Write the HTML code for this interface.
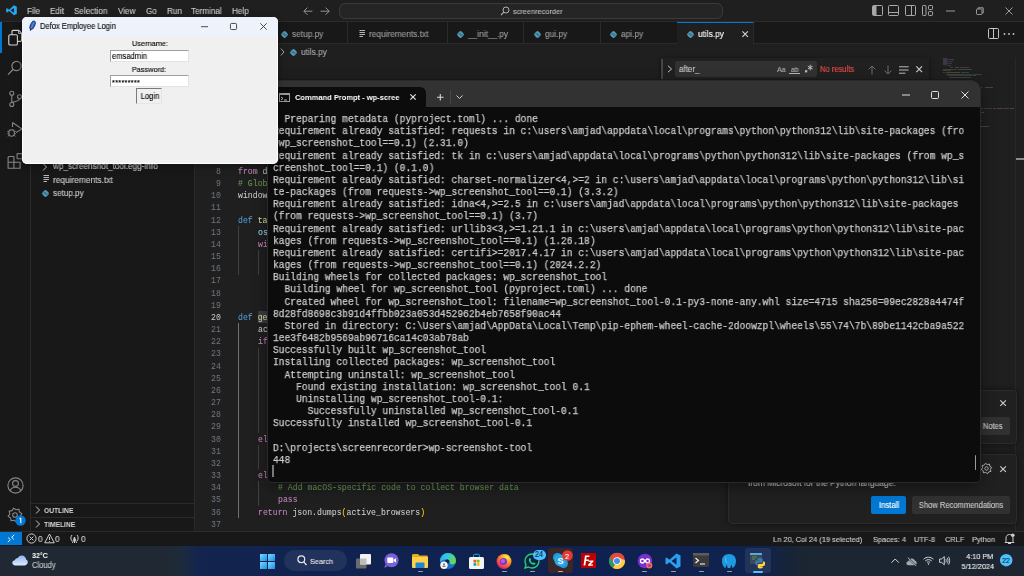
<!DOCTYPE html>
<html><head><meta charset="utf-8">
<style>
*{margin:0;padding:0;box-sizing:border-box}
html,body{width:1024px;height:576px;overflow:hidden;background:#1f1f1f;font-family:"Liberation Sans",sans-serif;position:relative}
.a{position:absolute}
.t{position:absolute;white-space:pre;line-height:1;will-change:transform;-webkit-text-stroke-width:0.12px}
svg.a{overflow:visible}
</style></head><body>

<div class="a" style="left:0px;top:0px;width:1024px;height:22px;background:#1f1f1f;border-bottom:1px solid #2b2b2b;"></div>
<div class="a" style="left:0px;top:22px;width:31px;height:509px;background:#181818;border-right:1px solid #2b2b2b;"></div>
<div class="a" style="left:31px;top:22px;width:164px;height:509px;background:#181818;border-right:1px solid #2b2b2b;"></div>
<div class="a" style="left:195px;top:22px;width:829px;height:22px;background:#181818;border-bottom:1px solid #2b2b2b;"></div>
<div class="a" style="left:0px;top:531px;width:1024px;height:14px;background:#181818;border-top:1px solid #2b2b2b;"></div>
<svg class="a" style="left:6px;top:5.2px;" width="11" height="10.6" viewBox="0 0 11 10.6"><path d="M7.9 0.3L10.8 1.7V8.9L7.9 10.3L3.1 5.9L1.1 7.4L0.2 7V3.6L1.1 3.2L3.1 4.7L7.9 0.3Z M7.9 2.9L4.6 5.3L7.9 7.7Z" fill="#23a9f2" fill-rule="evenodd"/></svg>
<div class="t" style="left:27.30px;top:7.2000px;font-size:8.7500px;color:#cccccc;font-family:'Liberation Sans',sans-serif;transform:scaleX(0.9259);transform-origin:0 0;">File</div>
<div class="t" style="left:50.00px;top:7.2000px;font-size:8.7500px;color:#cccccc;font-family:'Liberation Sans',sans-serif;transform:scaleX(0.9259);transform-origin:0 0;">Edit</div>
<div class="t" style="left:74.40px;top:7.2000px;font-size:8.7500px;color:#cccccc;font-family:'Liberation Sans',sans-serif;transform:scaleX(0.9259);transform-origin:0 0;">Selection</div>
<div class="t" style="left:118.00px;top:7.2000px;font-size:8.7500px;color:#cccccc;font-family:'Liberation Sans',sans-serif;transform:scaleX(0.9259);transform-origin:0 0;">View</div>
<div class="t" style="left:145.50px;top:7.2000px;font-size:8.7500px;color:#cccccc;font-family:'Liberation Sans',sans-serif;transform:scaleX(0.9259);transform-origin:0 0;">Go</div>
<div class="t" style="left:166.80px;top:7.2000px;font-size:8.7500px;color:#cccccc;font-family:'Liberation Sans',sans-serif;transform:scaleX(0.9259);transform-origin:0 0;">Run</div>
<div class="t" style="left:191.40px;top:7.2000px;font-size:8.7500px;color:#cccccc;font-family:'Liberation Sans',sans-serif;transform:scaleX(0.9259);transform-origin:0 0;">Terminal</div>
<div class="t" style="left:232.40px;top:7.2000px;font-size:8.7500px;color:#cccccc;font-family:'Liberation Sans',sans-serif;transform:scaleX(0.9259);transform-origin:0 0;">Help</div>
<svg class="a" style="left:303px;top:7px;" width="10" height="8.4" viewBox="0 0 10 8.4"><path d="M9.4 4.2H1M4.4 0.6L0.8 4.2L4.4 7.8" stroke="#a8a8a8" stroke-width="0.85" fill="none"/></svg>
<svg class="a" style="left:319.5px;top:7px;" width="10" height="8.4" viewBox="0 0 10 8.4"><path d="M0.6 4.2H9M5.6 0.6L9.2 4.2L5.6 7.8" stroke="#a8a8a8" stroke-width="0.85" fill="none"/></svg>
<div class="a" style="left:338.5px;top:3.2px;width:384px;height:15.6px;background:#252525;border:1px solid #3a3a3a;border-radius:6px;"></div>
<svg class="a" style="left:500px;top:6px;" width="10" height="10" viewBox="0 0 10 10"><circle cx="6" cy="4" r="3" stroke="#b0b0b0" stroke-width="1" fill="none"/><path d="M3.9 6.1L1 9" stroke="#b0b0b0" stroke-width="1.1"/></svg>
<div class="t" style="left:512.50px;top:8.0000px;font-size:7.9844px;color:#b8b8b8;font-family:'Liberation Sans',sans-serif;transform:scaleX(0.9259);transform-origin:0 0;">screenrecorder</div>
<svg class="a" style="left:872px;top:5px;" width="11" height="11" viewBox="0 0 11 11"><rect x="0.5" y="0.5" width="10" height="10" rx="1" stroke="#a8a8a8" fill="none"/><rect x="1" y="1" width="3.5" height="9" fill="#a8a8a8"/></svg>
<svg class="a" style="left:888px;top:5px;" width="11" height="11" viewBox="0 0 11 11"><rect x="0.5" y="0.5" width="10" height="10" rx="1" stroke="#a8a8a8" fill="none"/><path d="M0.5 7.5H10.5" stroke="#a8a8a8"/></svg>
<svg class="a" style="left:905px;top:5px;" width="11" height="11" viewBox="0 0 11 11"><rect x="0.5" y="0.5" width="10" height="10" rx="1" stroke="#a8a8a8" fill="none"/><path d="M6.5 0.5V10.5" stroke="#a8a8a8"/></svg>
<svg class="a" style="left:922px;top:5px;" width="11" height="11" viewBox="0 0 11 11"><rect x="0.5" y="0.5" width="3.5" height="10" rx="0.8" stroke="#a8a8a8" fill="none"/><rect x="6.5" y="0.5" width="4" height="4" rx="0.8" stroke="#a8a8a8" fill="none"/><rect x="6.5" y="6.5" width="4" height="4" rx="0.8" stroke="#a8a8a8" fill="none"/></svg>
<svg class="a" style="left:946px;top:10px;" width="9" height="2" viewBox="0 0 9 2"><path d="M0 1H9" stroke="#9a9a9a" stroke-width="1"/></svg>
<svg class="a" style="left:976px;top:7px;" width="8" height="8" viewBox="0 0 8 8"><rect x="0.5" y="2" width="5.5" height="5.5" rx="0.8" stroke="#9a9a9a" fill="none"/><path d="M2 2V0.8H7.2V6H6" stroke="#9a9a9a" fill="none"/></svg>
<svg class="a" style="left:1005px;top:7px;" width="8" height="8" viewBox="0 0 8 8"><path d="M0.5 0.5L7.5 7.5M7.5 0.5L0.5 7.5" stroke="#9a9a9a" stroke-width="1"/></svg>
<div class="a" style="left:0px;top:22px;width:1.6px;height:31px;background:#0078d4;"></div>
<svg class="a" style="left:7px;top:29px;" width="17" height="17" viewBox="0 0 17 17"><path d="M6.2 1.4H11.8L14.6 4.2V11.2Q14.6 12.4 13.4 12.4H6.2Q5 12.4 5 11.2V2.6Q5 1.4 6.2 1.4Z" stroke="#d7d7d7" stroke-width="1.1" fill="none"/><path d="M11.6 1.6V4.4H14.4" stroke="#d7d7d7" stroke-width="0.9" fill="none"/><rect x="1.8" y="5.8" width="8.6" height="10.2" rx="1.3" stroke="#d7d7d7" stroke-width="1.1" fill="#181818"/></svg>
<svg class="a" style="left:7px;top:60px;" width="16" height="16" viewBox="0 0 16 16"><circle cx="9.5" cy="6" r="4.6" stroke="#868686" stroke-width="1.2" fill="none"/><path d="M6.2 9.3L1 14.6" stroke="#868686" stroke-width="1.3"/></svg>
<svg class="a" style="left:7px;top:90px;" width="16" height="18" viewBox="0 0 16 18"><circle cx="4.8" cy="3.2" r="2" stroke="#868686" stroke-width="1.1" fill="none"/><circle cx="4.8" cy="14.5" r="2" stroke="#868686" stroke-width="1.1" fill="none"/><circle cx="12.5" cy="6.8" r="2" stroke="#868686" stroke-width="1.1" fill="none"/><path d="M4.8 5.2V12.5M12.5 8.8C12.5 11 9 11.5 4.8 12.5" stroke="#868686" stroke-width="1.1" fill="none"/></svg>
<svg class="a" style="left:6px;top:120px;" width="18" height="18" viewBox="0 0 18 18"><path d="M6.5 2.5V7M6.5 2.5L16 9L10 12.5" stroke="#868686" stroke-width="1.1" fill="none" stroke-linejoin="round"/><ellipse cx="5.6" cy="13" rx="2.8" ry="3.2" stroke="#868686" stroke-width="1.1" fill="none"/><path d="M1.3 11.3H2.8M8.4 11.3H9.9M1.3 13.6H2.8M8.4 13.6H9.9M1.8 16.3L3.2 15.2M9.4 16.3L8 15.2M3.6 9.7L4.5 10.5M7.6 9.7L6.7 10.5" stroke="#868686" stroke-width="0.9" fill="none"/></svg>
<svg class="a" style="left:6px;top:150px;" width="18" height="19" viewBox="0 0 18 19"><path d="M2.1 12.5V7.5Q2.1 6.5 3.1 6.5H7.9V18.3H2.1ZM2.1 12.3H14.1V18.3H7.9" stroke="#868686" stroke-width="1.1" fill="none"/><rect x="11.1" y="3.6" width="5.2" height="5.2" rx="0.5" stroke="#868686" stroke-width="1.1" fill="none"/></svg>
<svg class="a" style="left:7px;top:477px;" width="17" height="17" viewBox="0 0 17 17"><circle cx="8.5" cy="8.5" r="7.6" stroke="#868686" stroke-width="1.1" fill="none"/><circle cx="8.5" cy="6.5" r="2.9" stroke="#868686" stroke-width="1.1" fill="none"/><path d="M3.3 14C4 11.3 6 10.3 8.5 10.3S13 11.3 13.7 14" stroke="#868686" stroke-width="1.1" fill="none"/></svg>
<svg class="a" style="left:7px;top:507px;" width="16" height="16" viewBox="0 0 16 16"><path d="M14.87 6.63 L13.20 9.03 L13.82 11.89 L10.94 12.41 L9.37 14.87 L6.97 13.20 L4.11 13.82 L3.59 10.94 L1.13 9.37 L2.80 6.97 L2.18 4.11 L5.06 3.59 L6.63 1.13 L9.03 2.80 L11.89 2.18 L12.41 5.06Z" stroke="#868686" stroke-width="1.1" fill="none" stroke-linejoin="round"/><circle cx="8" cy="8" r="2.3" stroke="#868686" stroke-width="1.1" fill="none"/></svg>
<svg class="a" style="left:15px;top:515px;" width="11" height="11" viewBox="0 0 11 11"><circle cx="5.5" cy="5.5" r="5.2" fill="#0078d4"/><path d="M5.8 3V8.2M4.6 4L5.8 3" stroke="#fff" stroke-width="1.1" fill="none"/></svg>
<div class="t" style="left:53.00px;top:162.3000px;font-size:8.8594px;color:#cccccc;font-family:'Liberation Sans',sans-serif;transform:scaleX(0.9259);transform-origin:0 0;">wp_screenshot_tool.egg-info</div>
<svg class="a" style="left:42px;top:163px;" width="6" height="8" viewBox="0 0 6 8"><path d="M1 0.5L4.5 4L1 7.5" stroke="#c5c5c5" fill="none"/></svg>
<svg class="a" style="left:43px;top:175px;" width="7" height="8" viewBox="0 0 7 8"><path d="M0.5 0.5H6M0.5 2.5H6M0.5 4.5H6M0.5 6.5H4" stroke="#b4b4b4" stroke-width="1"/></svg>
<div class="t" style="left:53.00px;top:175.6000px;font-size:9.0000px;color:#cccccc;font-family:'Liberation Sans',sans-serif;transform:scaleX(0.9259);transform-origin:0 0;">requirements.txt</div>
<div class="t" style="left:53.00px;top:189.4000px;font-size:8.7500px;color:#cccccc;font-family:'Liberation Sans',sans-serif;transform:scaleX(0.9259);transform-origin:0 0;">setup.py</div>
<svg class="a" style="left:40.5px;top:188.5px;" width="9" height="9" viewBox="0 0 9 9"><rect x="1.6" y="1.6" width="5.8" height="5.8" rx="1.8" transform="rotate(45 4.5 4.5)" fill="#519aba"/><path d="M2.4 3.9L5 3.9M4 5.1L6.6 5.1" stroke="#1b1b1b" stroke-width="0.7" opacity="0.7"/></svg>
<div class="a" style="left:31px;top:503px;width:163px;height:1px;background:#2b2b2b;"></div>
<div class="a" style="left:31px;top:517px;width:163px;height:1px;background:#2b2b2b;"></div>
<svg class="a" style="left:35px;top:506px;" width="6" height="8" viewBox="0 0 6 8"><path d="M1 0.5L4.5 4L1 7.5" stroke="#c5c5c5" fill="none"/></svg>
<svg class="a" style="left:35px;top:520px;" width="6" height="8" viewBox="0 0 6 8"><path d="M1 0.5L4.5 4L1 7.5" stroke="#c5c5c5" fill="none"/></svg>
<div class="t" style="left:43.70px;top:507.4000px;font-size:7.6406px;color:#d6d6d6;font-family:'Liberation Sans',sans-serif;font-weight:700;transform:scaleX(0.8772);transform-origin:0 0;-webkit-text-stroke-width:0;">OUTLINE</div>
<div class="t" style="left:43.70px;top:521.4000px;font-size:7.6406px;color:#d6d6d6;font-family:'Liberation Sans',sans-serif;font-weight:700;transform:scaleX(0.8772);transform-origin:0 0;-webkit-text-stroke-width:0;">TIMELINE</div>
<div class="a" style="left:347px;top:22px;width:1px;height:22px;background:#2b2b2b;"></div>
<svg class="a" style="left:280.0px;top:29.5px;" width="9" height="9" viewBox="0 0 9 9"><rect x="1.6" y="1.6" width="5.8" height="5.8" rx="1.8" transform="rotate(45 4.5 4.5)" fill="#519aba"/><path d="M2.4 3.9L5 3.9M4 5.1L6.6 5.1" stroke="#1b1b1b" stroke-width="0.7" opacity="0.7"/></svg>
<div class="t" style="left:291.75px;top:30.3000px;font-size:8.9688px;color:#9d9d9d;font-family:'Liberation Sans',sans-serif;transform:scaleX(0.9259);transform-origin:0 0;">setup.py</div>
<div class="a" style="left:447px;top:22px;width:1px;height:22px;background:#2b2b2b;"></div>
<svg class="a" style="left:358.5px;top:30px;" width="7" height="8" viewBox="0 0 7 8"><path d="M0.5 0.5H6M0.5 2.5H6M0.5 4.5H6M0.5 6.5H4" stroke="#b4b4b4" stroke-width="1"/></svg>
<div class="t" style="left:368.50px;top:30.3000px;font-size:8.9688px;color:#9d9d9d;font-family:'Liberation Sans',sans-serif;transform:scaleX(0.9259);transform-origin:0 0;">requirements.txt</div>
<div class="a" style="left:523px;top:22px;width:1px;height:22px;background:#2b2b2b;"></div>
<svg class="a" style="left:455.75px;top:29.5px;" width="9" height="9" viewBox="0 0 9 9"><rect x="1.6" y="1.6" width="5.8" height="5.8" rx="1.8" transform="rotate(45 4.5 4.5)" fill="#519aba"/><path d="M2.4 3.9L5 3.9M4 5.1L6.6 5.1" stroke="#1b1b1b" stroke-width="0.7" opacity="0.7"/></svg>
<div class="t" style="left:468.00px;top:30.3000px;font-size:8.9688px;color:#9d9d9d;font-family:'Liberation Sans',sans-serif;transform:scaleX(0.9259);transform-origin:0 0;">__init__.py</div>
<div class="a" style="left:600px;top:22px;width:1px;height:22px;background:#2b2b2b;"></div>
<svg class="a" style="left:532.5px;top:29.5px;" width="9" height="9" viewBox="0 0 9 9"><rect x="1.6" y="1.6" width="5.8" height="5.8" rx="1.8" transform="rotate(45 4.5 4.5)" fill="#519aba"/><path d="M2.4 3.9L5 3.9M4 5.1L6.6 5.1" stroke="#1b1b1b" stroke-width="0.7" opacity="0.7"/></svg>
<div class="t" style="left:544.50px;top:30.3000px;font-size:8.9688px;color:#9d9d9d;font-family:'Liberation Sans',sans-serif;transform:scaleX(0.9259);transform-origin:0 0;">gui.py</div>
<div class="a" style="left:676.5px;top:22px;width:1px;height:22px;background:#2b2b2b;"></div>
<svg class="a" style="left:609.0px;top:29.5px;" width="9" height="9" viewBox="0 0 9 9"><rect x="1.6" y="1.6" width="5.8" height="5.8" rx="1.8" transform="rotate(45 4.5 4.5)" fill="#519aba"/><path d="M2.4 3.9L5 3.9M4 5.1L6.6 5.1" stroke="#1b1b1b" stroke-width="0.7" opacity="0.7"/></svg>
<div class="t" style="left:621.00px;top:30.3000px;font-size:8.9688px;color:#9d9d9d;font-family:'Liberation Sans',sans-serif;transform:scaleX(0.9259);transform-origin:0 0;">api.py</div>
<div class="a" style="left:677px;top:22px;width:77px;height:23px;background:#1f1f1f;border-top:1px solid #0078d4;border-right:1px solid #2b2b2b;"></div>
<svg class="a" style="left:686.0px;top:29.5px;" width="9" height="9" viewBox="0 0 9 9"><rect x="1.6" y="1.6" width="5.8" height="5.8" rx="1.8" transform="rotate(45 4.5 4.5)" fill="#519aba"/><path d="M2.4 3.9L5 3.9M4 5.1L6.6 5.1" stroke="#1b1b1b" stroke-width="0.7" opacity="0.7"/></svg>
<div class="t" style="left:698.00px;top:30.3000px;font-size:8.9688px;color:#ffffff;font-family:'Liberation Sans',sans-serif;transform:scaleX(0.9259);transform-origin:0 0;">utils.py</div>
<svg class="a" style="left:741.7px;top:31px;" width="6.3" height="6.3" viewBox="0 0 6.3 6.3"><path d="M0.4 0.4L5.9 5.9M5.9 0.4L0.4 5.9" stroke="#d0d0d0" stroke-width="1.15"/></svg>
<svg class="a" style="left:988px;top:28px;" width="11" height="11" viewBox="0 0 11 11"><rect x="0.5" y="0.5" width="10" height="10" rx="1" stroke="#c5c5c5" fill="none"/><path d="M5.5 0.5V10.5" stroke="#c5c5c5"/></svg>
<svg class="a" style="left:1003px;top:33px;" width="13" height="2" viewBox="0 0 13 2"><circle cx="1.5" cy="1" r="0.9" fill="#c5c5c5"/><circle cx="6" cy="1" r="0.9" fill="#c5c5c5"/><circle cx="10.5" cy="1" r="0.9" fill="#c5c5c5"/></svg>
<svg class="a" style="left:280px;top:48px;" width="5" height="8" viewBox="0 0 5 8"><path d="M0.8 0.5L4 4L0.8 7.5" stroke="#a9a9a9" fill="none"/></svg>
<svg class="a" style="left:289.0px;top:48.0px;" width="9" height="9" viewBox="0 0 9 9"><rect x="1.6" y="1.6" width="5.8" height="5.8" rx="1.8" transform="rotate(45 4.5 4.5)" fill="#519aba"/><path d="M2.4 3.9L5 3.9M4 5.1L6.6 5.1" stroke="#1b1b1b" stroke-width="0.7" opacity="0.7"/></svg>
<div class="t" style="left:301.00px;top:48.2000px;font-size:8.9688px;color:#a9a9a9;font-family:'Liberation Sans',sans-serif;transform:scaleX(0.9259);transform-origin:0 0;">utils.py</div>
<div class="a" style="left:0px;top:532px;width:22px;height:13px;background:#0078d4;"></div>
<svg class="a" style="left:7px;top:534px;" width="8" height="9" viewBox="0 0 8 9"><path d="M0.8 8.2L3.3 5.7L1.2 3.6M7.2 0.8L4.7 3.3L6.8 5.4" stroke="#fff" stroke-width="1" fill="none"/></svg>
<svg class="a" style="left:26px;top:533px;" width="11" height="11" viewBox="0 0 11 11"><circle cx="5.5" cy="5.5" r="4.6" stroke="#cccccc" stroke-width="1" fill="none"/><path d="M3.6 3.6L7.4 7.4M7.4 3.6L3.6 7.4" stroke="#cccccc" stroke-width="1"/></svg>
<div class="t" style="left:37.50px;top:534.8000px;font-size:8.8594px;color:#cccccc;font-family:'Liberation Sans',sans-serif;transform:scaleX(0.9259);transform-origin:0 0;">0</div>
<svg class="a" style="left:44px;top:533px;" width="11" height="11" viewBox="0 0 11 11"><path d="M5.5 1L10.3 9.8H0.7Z" stroke="#cccccc" stroke-width="1" fill="none" stroke-linejoin="round"/><path d="M5.5 4V7M5.5 8V8.8" stroke="#cccccc" stroke-width="1"/></svg>
<div class="t" style="left:55.00px;top:534.8000px;font-size:8.8594px;color:#cccccc;font-family:'Liberation Sans',sans-serif;transform:scaleX(0.9259);transform-origin:0 0;">0</div>
<svg class="a" style="left:69px;top:533px;" width="11" height="11" viewBox="0 0 11 11"><path d="M3 2C1.5 3.5 1.5 6.5 3 8M8 2C9.5 3.5 9.5 6.5 8 8M5.5 4V10M3.5 10L5.5 4L7.5 10" stroke="#cccccc" stroke-width="1" fill="none"/></svg>
<div class="t" style="left:80.50px;top:534.8000px;font-size:8.8594px;color:#cccccc;font-family:'Liberation Sans',sans-serif;transform:scaleX(0.9259);transform-origin:0 0;">0</div>
<div class="t" style="left:773.40px;top:535.8000px;font-size:8.0469px;color:#cccccc;font-family:'Liberation Sans',sans-serif;transform:scaleX(0.9259);transform-origin:0 0;">Ln 20, Col 24 (19 selected)</div>
<div class="t" style="left:872.75px;top:535.8000px;font-size:8.0469px;color:#cccccc;font-family:'Liberation Sans',sans-serif;transform:scaleX(0.9259);transform-origin:0 0;">Spaces: 4</div>
<div class="t" style="left:914.00px;top:535.8000px;font-size:8.0469px;color:#cccccc;font-family:'Liberation Sans',sans-serif;transform:scaleX(0.9259);transform-origin:0 0;">UTF-8</div>
<div class="t" style="left:944.60px;top:535.8000px;font-size:8.0469px;color:#cccccc;font-family:'Liberation Sans',sans-serif;transform:scaleX(0.9259);transform-origin:0 0;">CRLF</div>
<div class="t" style="left:971.80px;top:535.8000px;font-size:8.0469px;color:#cccccc;font-family:'Liberation Sans',sans-serif;transform:scaleX(0.9259);transform-origin:0 0;">Python</div>
<svg class="a" style="left:1004px;top:533px;" width="11" height="11" viewBox="0 0 11 11"><path d="M2 8.5V5C2 2.8 3.5 1.5 5.5 1.5S9 2.8 9 5V8.5L10 9.5H1ZM4 10.5H7" stroke="#cccccc" stroke-width="1" fill="none"/><circle cx="8.8" cy="2.3" r="1.8" fill="#cccccc"/></svg>
<div class="t" style="right:802.80px;top:82.6600px;font-size:8.2031px;color:#6e7681;font-family:'Liberation Mono',monospace;-webkit-text-stroke-width:0;">1</div>
<div class="t" style="right:802.80px;top:94.8300px;font-size:8.2031px;color:#6e7681;font-family:'Liberation Mono',monospace;-webkit-text-stroke-width:0;">2</div>
<div class="t" style="right:802.80px;top:107.0000px;font-size:8.2031px;color:#6e7681;font-family:'Liberation Mono',monospace;-webkit-text-stroke-width:0;">3</div>
<div class="t" style="right:802.80px;top:119.1700px;font-size:8.2031px;color:#6e7681;font-family:'Liberation Mono',monospace;-webkit-text-stroke-width:0;">4</div>
<div class="t" style="right:802.80px;top:131.3400px;font-size:8.2031px;color:#6e7681;font-family:'Liberation Mono',monospace;-webkit-text-stroke-width:0;">5</div>
<div class="t" style="right:802.80px;top:143.5100px;font-size:8.2031px;color:#6e7681;font-family:'Liberation Mono',monospace;-webkit-text-stroke-width:0;">6</div>
<div class="t" style="right:802.80px;top:155.6800px;font-size:8.2031px;color:#6e7681;font-family:'Liberation Mono',monospace;-webkit-text-stroke-width:0;">7</div>
<div class="t" style="right:802.80px;top:167.8500px;font-size:8.2031px;color:#6e7681;font-family:'Liberation Mono',monospace;-webkit-text-stroke-width:0;">8</div>
<div class="t" style="right:802.80px;top:180.0200px;font-size:8.2031px;color:#6e7681;font-family:'Liberation Mono',monospace;-webkit-text-stroke-width:0;">9</div>
<div class="t" style="right:802.80px;top:192.1900px;font-size:8.2031px;color:#6e7681;font-family:'Liberation Mono',monospace;-webkit-text-stroke-width:0;">10</div>
<div class="t" style="right:802.80px;top:204.3600px;font-size:8.2031px;color:#6e7681;font-family:'Liberation Mono',monospace;-webkit-text-stroke-width:0;">11</div>
<div class="t" style="right:802.80px;top:216.5300px;font-size:8.2031px;color:#6e7681;font-family:'Liberation Mono',monospace;-webkit-text-stroke-width:0;">12</div>
<div class="t" style="right:802.80px;top:228.7000px;font-size:8.2031px;color:#6e7681;font-family:'Liberation Mono',monospace;-webkit-text-stroke-width:0;">13</div>
<div class="t" style="right:802.80px;top:240.8700px;font-size:8.2031px;color:#6e7681;font-family:'Liberation Mono',monospace;-webkit-text-stroke-width:0;">14</div>
<div class="t" style="right:802.80px;top:253.0400px;font-size:8.2031px;color:#6e7681;font-family:'Liberation Mono',monospace;-webkit-text-stroke-width:0;">15</div>
<div class="t" style="right:802.80px;top:265.2100px;font-size:8.2031px;color:#6e7681;font-family:'Liberation Mono',monospace;-webkit-text-stroke-width:0;">16</div>
<div class="t" style="right:802.80px;top:277.3800px;font-size:8.2031px;color:#6e7681;font-family:'Liberation Mono',monospace;-webkit-text-stroke-width:0;">17</div>
<div class="t" style="right:802.80px;top:289.5500px;font-size:8.2031px;color:#6e7681;font-family:'Liberation Mono',monospace;-webkit-text-stroke-width:0;">18</div>
<div class="t" style="right:802.80px;top:301.7200px;font-size:8.2031px;color:#6e7681;font-family:'Liberation Mono',monospace;-webkit-text-stroke-width:0;">19</div>
<div class="t" style="right:802.80px;top:313.8900px;font-size:8.2031px;color:#cccccc;font-family:'Liberation Mono',monospace;-webkit-text-stroke-width:0;">20</div>
<div class="t" style="right:802.80px;top:326.0600px;font-size:8.2031px;color:#6e7681;font-family:'Liberation Mono',monospace;-webkit-text-stroke-width:0;">21</div>
<div class="t" style="right:802.80px;top:338.2300px;font-size:8.2031px;color:#6e7681;font-family:'Liberation Mono',monospace;-webkit-text-stroke-width:0;">22</div>
<div class="t" style="right:802.80px;top:350.4000px;font-size:8.2031px;color:#6e7681;font-family:'Liberation Mono',monospace;-webkit-text-stroke-width:0;">23</div>
<div class="t" style="right:802.80px;top:362.5700px;font-size:8.2031px;color:#6e7681;font-family:'Liberation Mono',monospace;-webkit-text-stroke-width:0;">24</div>
<div class="t" style="right:802.80px;top:374.7400px;font-size:8.2031px;color:#6e7681;font-family:'Liberation Mono',monospace;-webkit-text-stroke-width:0;">25</div>
<div class="t" style="right:802.80px;top:386.9100px;font-size:8.2031px;color:#6e7681;font-family:'Liberation Mono',monospace;-webkit-text-stroke-width:0;">26</div>
<div class="t" style="right:802.80px;top:399.0800px;font-size:8.2031px;color:#6e7681;font-family:'Liberation Mono',monospace;-webkit-text-stroke-width:0;">27</div>
<div class="t" style="right:802.80px;top:411.2500px;font-size:8.2031px;color:#6e7681;font-family:'Liberation Mono',monospace;-webkit-text-stroke-width:0;">28</div>
<div class="t" style="right:802.80px;top:423.4200px;font-size:8.2031px;color:#6e7681;font-family:'Liberation Mono',monospace;-webkit-text-stroke-width:0;">29</div>
<div class="t" style="right:802.80px;top:435.5900px;font-size:8.2031px;color:#6e7681;font-family:'Liberation Mono',monospace;-webkit-text-stroke-width:0;">30</div>
<div class="t" style="right:802.80px;top:447.7600px;font-size:8.2031px;color:#6e7681;font-family:'Liberation Mono',monospace;-webkit-text-stroke-width:0;">31</div>
<div class="t" style="right:802.80px;top:459.9300px;font-size:8.2031px;color:#6e7681;font-family:'Liberation Mono',monospace;-webkit-text-stroke-width:0;">32</div>
<div class="t" style="right:802.80px;top:472.1000px;font-size:8.2031px;color:#6e7681;font-family:'Liberation Mono',monospace;-webkit-text-stroke-width:0;">33</div>
<div class="t" style="right:802.80px;top:484.2700px;font-size:8.2031px;color:#6e7681;font-family:'Liberation Mono',monospace;-webkit-text-stroke-width:0;">34</div>
<div class="t" style="right:802.80px;top:496.4400px;font-size:8.2031px;color:#6e7681;font-family:'Liberation Mono',monospace;-webkit-text-stroke-width:0;">35</div>
<div class="t" style="right:802.80px;top:508.6100px;font-size:8.2031px;color:#6e7681;font-family:'Liberation Mono',monospace;-webkit-text-stroke-width:0;">36</div>
<div class="t" style="right:802.80px;top:520.7800px;font-size:8.2031px;color:#6e7681;font-family:'Liberation Mono',monospace;-webkit-text-stroke-width:0;">37</div>
<div class="a" style="left:257.8px;top:310.94px;width:12px;height:11.8px;background:#3a3d41;"></div>
<div class="a" style="left:238px;top:225.86px;width:1px;height:48.68px;background:#404040;"></div>
<div class="a" style="left:258px;top:250.2px;width:1px;height:24.34px;background:#404040;"></div>
<div class="a" style="left:238px;top:323.23px;width:1px;height:194.72px;background:#707070;"></div>
<div class="a" style="left:258px;top:347.56px;width:1px;height:85.19px;background:#404040;"></div>
<div class="a" style="left:258px;top:444.93px;width:1px;height:24.34px;background:#404040;"></div>
<div class="a" style="left:258px;top:481.44px;width:1px;height:24.34px;background:#404040;"></div>
<div class="t" style="left:238.25px;top:167.8500px;font-size:8.2px;font-family:'Liberation Mono',monospace;-webkit-text-stroke-width:0.05px;"><span style="color:#c586c0">from</span><span style="color:#cccccc"> datetime</span></div>
<div class="t" style="left:238.25px;top:180.0200px;font-size:8.2px;font-family:'Liberation Mono',monospace;-webkit-text-stroke-width:0.05px;"><span style="color:#6a9955"># Global</span></div>
<div class="t" style="left:238.25px;top:192.1900px;font-size:8.2px;font-family:'Liberation Mono',monospace;-webkit-text-stroke-width:0.05px;"><span style="color:#cccccc">window</span></div>
<div class="t" style="left:238.25px;top:216.5300px;font-size:8.2px;font-family:'Liberation Mono',monospace;-webkit-text-stroke-width:0.05px;"><span style="color:#569cd6">def</span><span style="color:#cccccc"> </span><span style="color:#dcdcaa">take</span></div>
<div class="t" style="left:257.97px;top:228.7000px;font-size:8.2px;font-family:'Liberation Mono',monospace;-webkit-text-stroke-width:0.05px;"><span style="color:#9cdcfe">os</span></div>
<div class="t" style="left:257.97px;top:240.8700px;font-size:8.2px;font-family:'Liberation Mono',monospace;-webkit-text-stroke-width:0.05px;"><span style="color:#c586c0">with</span></div>
<div class="t" style="left:238.25px;top:313.8900px;font-size:8.2px;font-family:'Liberation Mono',monospace;-webkit-text-stroke-width:0.05px;"><span style="color:#569cd6">def</span><span style="color:#cccccc"> </span><span style="color:#dcdcaa">get_</span></div>
<div class="t" style="left:257.97px;top:326.0600px;font-size:8.2px;font-family:'Liberation Mono',monospace;-webkit-text-stroke-width:0.05px;"><span style="color:#cccccc">active</span></div>
<div class="t" style="left:257.97px;top:338.2300px;font-size:8.2px;font-family:'Liberation Mono',monospace;-webkit-text-stroke-width:0.05px;"><span style="color:#c586c0">if</span></div>
<div class="t" style="left:257.97px;top:435.5900px;font-size:8.2px;font-family:'Liberation Mono',monospace;-webkit-text-stroke-width:0.05px;"><span style="color:#c586c0">elif</span></div>
<div class="t" style="left:257.97px;top:472.1000px;font-size:8.2px;font-family:'Liberation Mono',monospace;-webkit-text-stroke-width:0.05px;"><span style="color:#c586c0">elif</span></div>
<div class="t" style="left:277.69px;top:484.2700px;font-size:8.2px;font-family:'Liberation Mono',monospace;-webkit-text-stroke-width:0.05px;"><span style="color:#6a9955"># Add macOS-specific code to collect browser data</span></div>
<div class="t" style="left:277.69px;top:496.4400px;font-size:8.2px;font-family:'Liberation Mono',monospace;-webkit-text-stroke-width:0.05px;"><span style="color:#c586c0">pass</span></div>
<div class="t" style="left:257.97px;top:508.6100px;font-size:8.2px;font-family:'Liberation Mono',monospace;-webkit-text-stroke-width:0.05px;"><span style="color:#c586c0">return</span><span style="color:#cccccc"> </span><span style="color:#cccccc">json</span><span style="color:#cccccc">.</span><span style="color:#cccccc">dumps</span><span style="color:#ffd700">(</span><span style="color:#cccccc">active_browsers</span><span style="color:#ffd700">)</span></div>
<div class="a" style="left:943px;top:58px;width:4px;height:6.75px;background:#5e4466;opacity:0.55;"></div>
<div class="a" style="left:947px;top:59px;width:7px;height:0.75px;background:#555555;opacity:0.55;"></div>
<div class="a" style="left:947px;top:61px;width:6px;height:0.75px;background:#505050;opacity:0.55;"></div>
<div class="a" style="left:947px;top:63px;width:5px;height:0.75px;background:#505050;opacity:0.55;"></div>
<div class="a" style="left:947px;top:65px;width:4px;height:0.75px;background:#505050;opacity:0.55;"></div>
<div class="a" style="left:950px;top:67px;width:3px;height:0.75px;background:#555555;opacity:0.55;"></div>
<div class="a" style="left:955px;top:67px;width:4px;height:0.75px;background:#6e5a6e;opacity:0.55;"></div>
<div class="a" style="left:960px;top:67px;width:9px;height:0.75px;background:#555566;opacity:0.55;"></div>
<div class="a" style="left:943px;top:68.5px;width:14px;height:0.75px;background:#4a5e40;opacity:0.55;"></div>
<div class="a" style="left:958px;top:68.5px;width:14px;height:0.75px;background:#5a6a3e;opacity:0.55;"></div>
<div class="a" style="left:943px;top:70px;width:8px;height:0.75px;background:#555555;opacity:0.55;"></div>
<div class="a" style="left:943px;top:72px;width:2px;height:0.75px;background:#3b5f85;opacity:0.55;"></div>
<div class="a" style="left:946px;top:72px;width:14px;height:0.75px;background:#6a6a50;opacity:0.55;"></div>
<div class="a" style="left:961px;top:72px;width:8px;height:0.75px;background:#3b5f85;opacity:0.55;"></div>
<div class="a" style="left:946px;top:73.5px;width:12px;height:0.75px;background:#6a5a6a;opacity:0.55;"></div>
<div class="a" style="left:958px;top:73.5px;width:14px;height:0.75px;background:#555555;opacity:0.55;"></div>
<div class="a" style="left:973px;top:73.5px;width:9px;height:0.75px;background:#3b5f85;opacity:0.55;"></div>
<div class="a" style="left:948px;top:75px;width:28px;height:0.75px;background:#44603a;opacity:0.55;"></div>
<div class="a" style="left:949px;top:76.5px;width:8px;height:0.75px;background:#555555;opacity:0.55;"></div>
<div class="a" style="left:957px;top:76.5px;width:6px;height:0.75px;background:#3b5f85;opacity:0.55;"></div>
<div class="a" style="left:963px;top:76.5px;width:8px;height:0.75px;background:#555555;opacity:0.55;"></div>
<div class="a" style="left:980px;top:86.5px;width:2px;height:0.75px;background:#7a5a40;opacity:0.55;"></div>
<div class="a" style="left:985px;top:86.5px;width:8px;height:0.75px;background:#7a5a40;opacity:0.55;"></div>
<div class="a" style="left:980px;top:108px;width:3px;height:0.75px;background:#6a5a6a;opacity:0.55;"></div>
<div class="a" style="left:984px;top:108px;width:8px;height:0.75px;background:#505050;opacity:0.55;"></div>
<div class="a" style="left:993px;top:108px;width:3px;height:0.75px;background:#6a5a6a;opacity:0.55;"></div>
<div class="a" style="left:997px;top:108px;width:6px;height:0.75px;background:#7a5a40;opacity:0.55;"></div>
<div class="a" style="left:1004px;top:108px;width:5px;height:0.75px;background:#7a5a40;opacity:0.55;"></div>
<div class="a" style="left:1010px;top:108px;width:4px;height:0.75px;background:#7a5a40;opacity:0.55;"></div>
<div class="a" style="left:980px;top:112px;width:4px;height:0.75px;background:#7a5a40;opacity:0.55;"></div>
<div class="a" style="left:980px;top:120px;width:2px;height:0.75px;background:#44603a;opacity:0.55;"></div>
<div class="a" style="left:980px;top:126px;width:9px;height:0.75px;background:#7a5a40;opacity:0.55;"></div>
<div class="a" style="left:1015px;top:58px;width:1px;height:473px;background:#282828;"></div>
<div class="a" style="left:1016px;top:158px;width:8px;height:1.5px;background:#8a8a8a;"></div>
<div class="a" style="left:661px;top:58px;width:268px;height:22px;background:#202020;box-shadow:0 1px 4px rgba(0,0,0,0.6);"></div>
<div class="a" style="left:661px;top:59px;width:2px;height:20px;background:#454545;"></div>
<svg class="a" style="left:667px;top:65px;" width="6" height="8" viewBox="0 0 6 8"><path d="M1 0.8L4.6 4L1 7.2" stroke="#c5c5c5" stroke-width="1" fill="none"/></svg>
<div class="a" style="left:675px;top:61px;width:142px;height:16px;background:#313131;border-radius:2px;"></div>
<div class="t" style="left:679.40px;top:65.4000px;font-size:8.6406px;color:#cccccc;font-family:'Liberation Sans',sans-serif;transform:scaleX(0.9259);transform-origin:0 0;">after_</div>
<div class="t" style="left:776.50px;top:66.0000px;font-size:7.5625px;color:#b0b0b0;font-family:'Liberation Sans',sans-serif;transform:scaleX(0.9259);transform-origin:0 0;">Aa</div>
<div class="t" style="left:790.50px;top:65.5000px;font-size:7.5625px;color:#b0b0b0;font-family:'Liberation Sans',sans-serif;transform:scaleX(0.9259);transform-origin:0 0;">ab</div>
<div class="a" style="left:789.3px;top:72.6px;width:11px;height:0.9px;background:#b8b8b8;"></div>
<svg class="a" style="left:804.5px;top:65px;" width="8" height="8" viewBox="0 0 8 8"><rect x="0" y="5.2" width="2.2" height="2.2" fill="#c0c0c0"/><path d="M5.2 -0.2V5.4M2.8 1.2L7.6 4M7.6 1.2L2.8 4" stroke="#c0c0c0" stroke-width="1"/></svg>
<div class="t" style="left:819.75px;top:66.4000px;font-size:8.2031px;color:#f14c4c;font-family:'Liberation Sans',sans-serif;transform:scaleX(0.9259);transform-origin:0 0;">No results</div>
<svg class="a" style="left:868.3px;top:64.5px;" width="8" height="10" viewBox="0 0 8 10"><path d="M4 9.5V1M0.6 4.4L4 1L7.4 4.4" stroke="#6e6e6e" stroke-width="1" fill="none"/></svg>
<svg class="a" style="left:884.3px;top:64.5px;" width="8" height="10" viewBox="0 0 8 10"><path d="M4 0.5V9M0.6 5.6L4 9L7.4 5.6" stroke="#6e6e6e" stroke-width="1" fill="none"/></svg>
<svg class="a" style="left:899px;top:65.5px;" width="10" height="8" viewBox="0 0 10 8"><path d="M0 0.8H9.6M0 4H9.6M0 7.2H6.4" stroke="#c5c5c5" stroke-width="0.95" fill="none"/></svg>
<svg class="a" style="left:915.8px;top:65.8px;" width="6.4" height="6.4" viewBox="0 0 6.4 6.4"><path d="M0.3 0.3L6.1 6.1M6.1 0.3L0.3 6.1" stroke="#d0d0d0" stroke-width="1.1"/></svg>
<div class="a" style="left:727.5px;top:389.5px;width:289px;height:54.5px;background:#202020;border:1px solid #2b2b2b;border-radius:4px;box-shadow:0 0 6px rgba(0,0,0,0.5);"></div>
<svg class="a" style="left:1000.3px;top:400px;" width="6.2" height="6.2" viewBox="0 0 6.2 6.2"><path d="M0.3 0.3L5.9 5.9M5.9 0.3L0.3 5.9" stroke="#d0d0d0" stroke-width="1.1"/></svg>
<div class="a" style="left:940px;top:416.8px;width:70.3px;height:17.8px;background:#313131;border-radius:2px;"></div>
<div class="t" style="left:953.00px;top:422.9000px;font-size:8.2031px;color:#cccccc;font-family:'Liberation Sans',sans-serif;transform:scaleX(0.9259);transform-origin:0 0;">Release Notes</div>
<div class="a" style="left:727.5px;top:454.3px;width:289px;height:69.7px;background:#202020;border:1px solid #2b2b2b;border-radius:4px;box-shadow:0 0 6px rgba(0,0,0,0.5);"></div>
<div class="t" style="left:748.00px;top:479.2000px;font-size:9.1250px;color:#c8c8c8;font-family:'Liberation Sans',sans-serif;transform:scaleX(0.9259);transform-origin:0 0;">from Microsoft for the Python language.</div>
<svg class="a" style="left:981px;top:463px;" width="11" height="11" viewBox="0 0 11 11"><path d="M10.70 4.47 L9.42 6.28 L9.91 8.44 L7.72 8.83 L6.53 10.70 L4.72 9.42 L2.56 9.91 L2.17 7.72 L0.30 6.53 L1.58 4.72 L1.09 2.56 L3.28 2.17 L4.47 0.30 L6.28 1.58 L8.44 1.09 L8.83 3.28Z" stroke="#c5c5c5" stroke-width="0.9" fill="none" stroke-linejoin="round"/><circle cx="5.5" cy="5.5" r="1.7" stroke="#c5c5c5" stroke-width="0.9" fill="none"/></svg>
<svg class="a" style="left:1000.3px;top:465.5px;" width="6.2" height="6.2" viewBox="0 0 6.2 6.2"><path d="M0.3 0.3L5.9 5.9M5.9 0.3L0.3 5.9" stroke="#d0d0d0" stroke-width="1.1"/></svg>
<div class="a" style="left:871.4px;top:495.8px;width:34.5px;height:18.4px;background:#0078d4;border-radius:2px;"></div>
<div class="t" style="left:888.90px;top:501.0000px;font-size:8.3438px;color:#ffffff;font-family:'Liberation Sans',sans-serif;transform:translateX(-50%) scaleX(0.9259);transform-origin:50% 0;">Install</div>
<div class="a" style="left:912px;top:495.8px;width:98px;height:18.4px;background:#313131;border-radius:2px;"></div>
<div class="t" style="left:961.00px;top:502.0000px;font-size:8.2031px;color:#cccccc;font-family:'Liberation Sans',sans-serif;transform:translateX(-50%) scaleX(0.9259);transform-origin:50% 0;">Show Recommendations</div>
<div class="a" style="left:268px;top:81px;width:712px;height:401.3px;background:#0c0c0c;border-radius:8px 8px 4px 4px;box-shadow:0 0 0 1px #2a2a2a, 0 -1px 0 1px #171717, 0 4px 16px rgba(0,0,0,0.45);"></div>
<div class="a" style="left:268px;top:81px;width:712px;height:26.3px;background:#323232;border-radius:8px 8px 0 0;"></div>
<div class="a" style="left:268px;top:87px;width:158px;height:21px;background:#0c0c0c;border-radius:6px 6px 0 0;"></div>
<svg class="a" style="left:278.5px;top:93px;" width="11" height="9" viewBox="0 0 11 9"><rect x="0.5" y="0.5" width="10" height="8" stroke="#9a9a9a" fill="none"/><rect x="0.5" y="0.5" width="10" height="1.5" fill="#9a9a9a"/><path d="M2 4L4 5.5L2 7M5 7H8" stroke="#cfcfcf" stroke-width="0.9" fill="none"/></svg>
<div class="t" style="left:295.20px;top:94.3000px;font-size:8.1250px;color:#ffffff;font-family:'Liberation Sans',sans-serif;font-weight:700;transform:scaleX(0.9259);transform-origin:0 0;-webkit-text-stroke-width:0;">Command Prompt - wp-scree</div>
<svg class="a" style="left:409.5px;top:94.3px;" width="6" height="6" viewBox="0 0 6 6"><path d="M0.3 0.3L5.7 5.7M5.7 0.3L0.3 5.7" stroke="#e8e8e8" stroke-width="1.1"/></svg>
<svg class="a" style="left:437px;top:94px;" width="6.6" height="6.6" viewBox="0 0 6.6 6.6"><path d="M3.3 0V6.6M0 3.3H6.6" stroke="#d8d8d8" stroke-width="1.1"/></svg>
<div class="a" style="left:450px;top:90px;width:1px;height:14px;background:#454545;"></div>
<svg class="a" style="left:456px;top:95px;" width="7" height="4" viewBox="0 0 7 4"><path d="M0.5 0.5L3.5 3.5L6.5 0.5" stroke="#d0d0d0" stroke-width="1" fill="none"/></svg>
<svg class="a" style="left:902px;top:94px;" width="8" height="2" viewBox="0 0 8 2"><path d="M0 1H8" stroke="#e0e0e0" stroke-width="1"/></svg>
<svg class="a" style="left:931px;top:91px;" width="8" height="8" viewBox="0 0 8 8"><rect x="0.5" y="0.5" width="7" height="7" rx="1" stroke="#e0e0e0" stroke-width="1" fill="none"/></svg>
<svg class="a" style="left:961px;top:90.5px;" width="8" height="8" viewBox="0 0 8 8"><path d="M0.5 0.5L7.5 7.5M7.5 0.5L0.5 7.5" stroke="#e0e0e0" stroke-width="1"/></svg>
<div class="t" style="left:272.95px;top:112.99px;font-size:10.6px;line-height:12.17px;font-family:'Liberation Mono',monospace;color:#cccccc;-webkit-text-stroke:0.25px #cccccc;transform:scaleX(0.9060);transform-origin:0 0;">  Preparing metadata (pyproject.toml) ... done
Requirement already satisfied: requests in c:\users\amjad\appdata\local\programs\python\python312\lib\site-packages (fro
 wp_screenshot_tool==0.1) (2.31.0)
Requirement already satisfied: tk in c:\users\amjad\appdata\local\programs\python\python312\lib\site-packages (from wp_s
creenshot_tool==0.1) (0.1.0)
Requirement already satisfied: charset-normalizer&lt;4,&gt;=2 in c:\users\amjad\appdata\local\programs\python\python312\lib\si
te-packages (from requests-&gt;wp_screenshot_tool==0.1) (3.3.2)
Requirement already satisfied: idna&lt;4,&gt;=2.5 in c:\users\amjad\appdata\local\programs\python\python312\lib\site-packages
(from requests-&gt;wp_screenshot_tool==0.1) (3.7)
Requirement already satisfied: urllib3&lt;3,&gt;=1.21.1 in c:\users\amjad\appdata\local\programs\python\python312\lib\site-pac
kages (from requests-&gt;wp_screenshot_tool==0.1) (1.26.18)
Requirement already satisfied: certifi&gt;=2017.4.17 in c:\users\amjad\appdata\local\programs\python\python312\lib\site-pac
kages (from requests-&gt;wp_screenshot_tool==0.1) (2024.2.2)
Building wheels for collected packages: wp_screenshot_tool
  Building wheel for wp_screenshot_tool (pyproject.toml) ... done
  Created wheel for wp_screenshot_tool: filename=wp_screenshot_tool-0.1-py3-none-any.whl size=4715 sha256=09ec2828a4474f
8d28fd8698c3b91d4ffbb023a053d452962b4eb7658f90ac44
  Stored in directory: C:\Users\amjad\AppData\Local\Temp\pip-ephem-wheel-cache-2doowzpl\wheels\55\74\7b\89be1142cba9a522
1ee3f6482b9569ab96716ca14c03ab78ab
Successfully built wp_screenshot_tool
Installing collected packages: wp_screenshot_tool
  Attempting uninstall: wp_screenshot_tool
    Found existing installation: wp_screenshot_tool 0.1
    Uninstalling wp_screenshot_tool-0.1:
      Successfully uninstalled wp_screenshot_tool-0.1
Successfully installed wp_screenshot_tool-0.1

D:\projects\screenrecorder&gt;wp-screenshot-tool
448</div>
<div class="a" style="left:272px;top:465.3px;width:1.8px;height:12.2px;background:#7a7a7a;"></div>
<div class="a" style="left:974.5px;top:455px;width:1.6px;height:15px;background:#9a9a9a;border-radius:1px;"></div>
<div class="a" style="left:22px;top:17px;width:256px;height:147.4px;background:#f0f0f0;border-radius:5px;box-shadow:inset 0 0 0 1px #ffffff, 0 2px 8px rgba(0,0,0,0.4);"></div>
<div class="a" style="left:22px;top:17px;width:256px;height:19.4px;background:#edf2fb;border-radius:5px 5px 0 0;"></div>
<svg class="a" style="left:27px;top:19px;" width="12" height="14" viewBox="0 0 12 14"><ellipse cx="5.6" cy="6.2" rx="2.2" ry="4.6" transform="rotate(25 5.6 6.2)" fill="#2f62c8" stroke="#1b2f5a" stroke-width="0.7"/><path d="M6.8 3.2L4.2 9.4" stroke="#7fb0ff" stroke-width="0.6"/><path d="M3.8 9.6L3.4 11.6" stroke="#222" stroke-width="1.1"/></svg>
<div class="t" style="left:40.30px;top:23.4000px;font-size:8.1562px;color:#000000;font-family:'Liberation Sans',sans-serif;transform:scaleX(0.9259);transform-origin:0 0;">Defox Employee Login</div>
<svg class="a" style="left:201.3px;top:26px;" width="7" height="1.5" viewBox="0 0 7 1.5"><path d="M0 0.7H7" stroke="#3a3a3a" stroke-width="0.9"/></svg>
<svg class="a" style="left:230px;top:23px;" width="7" height="7" viewBox="0 0 7 7"><rect x="0.45" y="0.45" width="6.1" height="6.1" rx="1" stroke="#3a3a3a" stroke-width="0.9" fill="none"/></svg>
<svg class="a" style="left:259.7px;top:23px;" width="7" height="7" viewBox="0 0 7 7"><path d="M0.3 0.3L6.7 6.7M6.7 0.3L0.3 6.7" stroke="#3a3a3a" stroke-width="0.9"/></svg>
<div class="t" style="left:149.60px;top:40.2000px;font-size:7.9844px;color:#000000;font-family:'Liberation Sans',sans-serif;transform:translateX(-50%) scaleX(0.9259);transform-origin:50% 0;">Username:</div>
<div class="a" style="left:110.3px;top:49.8px;width:78.7px;height:11.9px;background:#ffffff;border-top:1px solid #a0a0a0;border-left:1px solid #a0a0a0;border-right:1px solid #e3e3e3;border-bottom:1px solid #e3e3e3;"></div>
<div class="t" style="left:111.80px;top:52.9000px;font-size:8.2031px;color:#000000;font-family:'Liberation Sans',sans-serif;transform:scaleX(0.9259);transform-origin:0 0;">emsadmin</div>
<div class="t" style="left:149.40px;top:65.7000px;font-size:7.9844px;color:#000000;font-family:'Liberation Sans',sans-serif;transform:translateX(-50%) scaleX(0.9259);transform-origin:50% 0;">Password:</div>
<div class="a" style="left:110.3px;top:75.3px;width:78.7px;height:12.2px;background:#ffffff;border-top:1px solid #a0a0a0;border-left:1px solid #a0a0a0;border-right:1px solid #e3e3e3;border-bottom:1px solid #e3e3e3;"></div>
<div class="t" style="left:111.60px;top:78.5000px;font-size:7.2969px;color:#000000;font-family:'Liberation Sans',sans-serif;letter-spacing:0.3px;">*********</div>
<div class="a" style="left:136.3px;top:87.9px;width:25.6px;height:15.8px;background:#f0f0f0;border-top:1px solid #7a7a7a;border-left:1px solid #7a7a7a;border-right:1px solid #e6e6e6;border-bottom:1px solid #e6e6e6;"></div>
<div class="t" style="left:149.70px;top:93.3000px;font-size:8.2031px;color:#000000;font-family:'Liberation Sans',sans-serif;transform:translateX(-50%) scaleX(0.9259);transform-origin:50% 0;">Login</div>
<div class="a" style="left:0px;top:545px;width:1024px;height:31px;background:linear-gradient(90deg,#1f2833 0%,#202933 16.5%,#1d2a3c 17.8%,#13254e 19.3%,#10224f 30%,#0f2150 60%,#10224e 74.5%,#172438 77%,#1c2632 79%,#1c2530 100%);border-top:1px solid #14181e;"></div>
<svg class="a" style="left:12px;top:554.5px;" width="16" height="11" viewBox="0 0 16 11"><defs><linearGradient id="cl" x1="0" y1="0" x2="0" y2="1"><stop offset="0" stop-color="#8fb6f0"/><stop offset="1" stop-color="#dde9fb"/></linearGradient></defs><path d="M3.2 10.4C1.5 10.4 0.3 9.3 0.3 7.8C0.3 6.4 1.4 5.3 2.9 5.2C3.3 3.8 4.5 2.9 5.9 2.9C6.5 1.4 8 0.4 9.8 0.4C12.2 0.4 14 2.1 14.1 4.4C15.2 4.8 15.8 5.9 15.8 7.1C15.8 9 14.5 10.4 12.6 10.4Z" fill="url(#cl)"/></svg>
<div class="t" style="left:32.20px;top:551.8000px;font-size:7.6719px;color:#ffffff;font-family:'Liberation Sans',sans-serif;font-weight:700;transform:scaleX(0.9259);transform-origin:0 0;-webkit-text-stroke-width:0;">32°C</div>
<div class="t" style="left:32.20px;top:562.3000px;font-size:8.2031px;color:#c8c8c8;font-family:'Liberation Sans',sans-serif;transform:scaleX(0.9259);transform-origin:0 0;">Cloudy</div>
<svg class="a" style="left:260px;top:553.5px;" width="15" height="15" viewBox="0 0 15 15"><defs><linearGradient id="wl" x1="0" y1="0" x2="1" y2="1"><stop offset="0" stop-color="#7fd6ff"/><stop offset="1" stop-color="#1591e6"/></linearGradient></defs><rect x="0" y="0" width="7" height="7" fill="url(#wl)"/><rect x="8" y="0" width="7" height="7" fill="url(#wl)"/><rect x="0" y="8" width="7" height="7" fill="url(#wl)"/><rect x="8" y="8" width="7" height="7" fill="url(#wl)"/></svg>
<div class="a" style="left:283.6px;top:550px;width:63.4px;height:21px;background:rgba(255,255,255,0.075);border-radius:11px;"></div>
<svg class="a" style="left:297px;top:555px;" width="10" height="11" viewBox="0 0 10 11"><circle cx="4.3" cy="4.3" r="3.4" stroke="#e8e8e8" stroke-width="1.2" fill="none"/><path d="M6.7 6.9L9.5 10" stroke="#e8e8e8" stroke-width="1.3"/></svg>
<div class="t" style="left:310.30px;top:558.3000px;font-size:7.8906px;color:#e6e6e6;font-family:'Liberation Sans',sans-serif;transform:scaleX(0.9259);transform-origin:0 0;">Search</div>
<svg class="a" style="left:356px;top:553.5px;" width="15" height="15" viewBox="0 0 15 15"><rect x="0" y="4.5" width="10.5" height="10" rx="1" fill="#6b6b6b"/><rect x="4" y="0" width="11" height="10.5" rx="1" fill="#f2f2f2"/><rect x="4" y="4.5" width="6.5" height="6" fill="#bdbdbd"/></svg>
<svg class="a" style="left:384px;top:553px;" width="15" height="15" viewBox="0 0 15 15"><circle cx="7.5" cy="7.2" r="7" fill="#7b61d9"/><path d="M1 11.5L0.5 15L4 13" fill="#7b61d9"/><rect x="3.3" y="4.6" width="6" height="5.4" rx="1" fill="#ffffff"/><path d="M9.6 6.7L12 5.3V9.4L9.6 8Z" fill="#ffffff"/></svg>
<svg class="a" style="left:412px;top:554px;" width="16" height="14" viewBox="0 0 16 14"><path d="M0 1.5C0 0.7 0.6 0 1.5 0H6L7.5 1.6H14.5C15.3 1.6 16 2.3 16 3.1V4H0Z" fill="#e8a91c"/><rect x="0" y="3" width="16" height="11" rx="1" fill="#ffd14a"/><rect x="3.5" y="8.5" width="9" height="5.5" rx="0.6" fill="#1f84d4"/></svg>
<svg class="a" style="left:440px;top:553px;" width="16" height="16" viewBox="0 0 16 16"><defs><linearGradient id="eg" x1="0" y1="0" x2="1" y2="0.3"><stop offset="0" stop-color="#2aa8ee"/><stop offset="0.45" stop-color="#36c4e8"/><stop offset="1" stop-color="#62da4e"/></linearGradient></defs><circle cx="8" cy="8" r="8" fill="#1a6fc9"/><path d="M0 8A8 8 0 0 1 16 8C16 10 14.5 11.5 12.5 11.5C10.5 11.5 9.2 10.2 9.2 8.6C9.2 7.3 8.3 6.3 7 6.3C4.5 6.3 1.5 7.5 0 9Z" fill="url(#eg)"/><ellipse cx="7.3" cy="8.6" rx="2.2" ry="2.1" fill="#0f2150"/><circle cx="4" cy="12.3" r="3.7" fill="#f5f5f5"/><circle cx="4" cy="11.3" r="1" fill="#777"/><path d="M2.4 14C2.4 13 3.1 12.6 4 12.6S5.6 13 5.6 14Z" fill="#777"/></svg>
<svg class="a" style="left:468.5px;top:553.5px;" width="15" height="15" viewBox="0 0 15 15"><path d="M4.5 3V1.5C4.5 0.8 5 0.3 5.7 0.3H9.3C10 0.3 10.5 0.8 10.5 1.5V3" stroke="#2aa3e6" stroke-width="1" fill="none"/><rect x="0" y="3" width="15" height="12" rx="1.5" fill="#f4f4f4"/><rect x="4.5" y="5.8" width="2.7" height="2.7" fill="#f25022"/><rect x="7.8" y="5.8" width="2.7" height="2.7" fill="#7fba00"/><rect x="4.5" y="9.1" width="2.7" height="2.7" fill="#00a4ef"/><rect x="7.8" y="9.1" width="2.7" height="2.7" fill="#ffb900"/></svg>
<svg class="a" style="left:496px;top:552.5px;" width="16" height="16" viewBox="0 0 16 16"><defs><radialGradient id="ff" cx="0.7" cy="0.2" r="1"><stop offset="0" stop-color="#fff44f"/><stop offset="0.45" stop-color="#ff8a16"/><stop offset="0.8" stop-color="#e2246b"/></radialGradient></defs><circle cx="8" cy="8.5" r="7.5" fill="url(#ff)"/><path d="M10 1L13 2.5L11.5 4Z" fill="#ffbd2e"/><circle cx="7.5" cy="8.5" r="3.6" fill="#8533c9"/><circle cx="7" cy="8" r="2" fill="#b45ef0"/></svg>
<svg class="a" style="left:524px;top:553px;" width="16" height="16" viewBox="0 0 16 16"><path d="M8 1C4.1 1 1 4.1 1 8C1 9.3 1.3 10.5 2 11.6L1 15L4.5 14C5.5 14.6 6.7 15 8 15C11.9 15 15 11.9 15 8S11.9 1 8 1Z" stroke="#25d366" stroke-width="1.4" fill="none"/><path d="M5.5 5.3C5.8 5 6.3 5 6.5 5.4L7 6.7C7.1 7 7 7.3 6.8 7.5L6.5 7.8C7 8.8 7.8 9.6 8.8 10L9.2 9.7C9.4 9.5 9.7 9.4 10 9.5L11.2 10.1C11.5 10.3 11.6 10.7 11.3 11C10.8 11.7 10 12 9 11.7C7 11 5.4 9.4 4.9 7.4C4.7 6.5 5 5.8 5.5 5.3Z" fill="#25d366"/></svg>
<div class="a" style="left:532.5px;top:549.5px;width:13px;height:10px;background:#4cc2ff;border-radius:5px;"></div>
<div class="t" style="left:539.00px;top:551.2000px;font-size:8.2031px;color:#10223d;font-family:'Liberation Sans',sans-serif;transform:translateX(-50%) scaleX(0.9259);transform-origin:50% 0;">24</div>
<div class="a" style="left:548px;top:547.8px;width:25px;height:24.8px;background:#3a2626;border-radius:3px;"></div>
<svg class="a" style="left:553px;top:553px;" width="15" height="15" viewBox="0 0 15 15"><circle cx="4.5" cy="4.5" r="4.5" fill="#1e9be0"/><circle cx="10.5" cy="10.5" r="4.5" fill="#1e9be0"/><circle cx="7.5" cy="7.5" r="6" fill="#2aa6ea"/><text x="7.5" y="11" font-family="Liberation Sans" font-weight="700" font-size="9" fill="#fff" text-anchor="middle">S</text></svg>
<svg class="a" style="left:561.5px;top:550px;" width="11" height="11" viewBox="0 0 11 11"><circle cx="5.5" cy="5.5" r="5.3" fill="#e53935"/></svg>
<div class="t" style="left:567.00px;top:552.5000px;font-size:7.7812px;color:#ffffff;font-family:'Liberation Sans',sans-serif;transform:translateX(-50%) scaleX(0.9259);transform-origin:50% 0;">2</div>
<svg class="a" style="left:581px;top:553px;" width="15" height="15" viewBox="0 0 15 15"><rect x="0" y="0" width="15" height="15" fill="#bf0000"/><path d="M2.5 12.5L4 2.5H8.5L8.3 4H5.6L5.2 6.5H7.8L7.6 8H5L4.3 12.5Z" fill="#fff"/><path d="M7.5 7.5H12.5L12.3 8.8L9.5 11.5H12L11.8 12.8H7L7.2 11.5L10 8.8H7.3Z" fill="#fff"/></svg>
<svg class="a" style="left:608.7px;top:552.5px;" width="16" height="16" viewBox="0 0 16 16"><circle cx="8" cy="8" r="8" fill="#dd4b3e"/><path d="M8 8L1.1 4A8 8 0 0 0 4 14.9Z" fill="#1da462"/><path d="M8 8L4 14.9A8 8 0 0 0 15.9 7.2L8.5 4Z" fill="#ffcd46"/><path d="M8 4H15.3A8 8 0 0 0 1.1 4L4.5 10Z" fill="#dd4b3e"/><circle cx="8" cy="8" r="3.8" fill="#fff"/><circle cx="8" cy="8" r="3" fill="#4c8bf5"/></svg>
<svg class="a" style="left:637px;top:553px;" width="16" height="16" viewBox="0 0 16 16"><circle cx="8" cy="8" r="7.3" fill="#7a2fd0"/><path d="M3.5 8C3.5 6.6 4.6 6 5.5 6S7 6.7 8 8S9.6 10 10.5 10S12.5 9.4 12.5 8S11.4 6 10.5 6S9 6.7 8 8S6.4 10 5.5 10S3.5 9.4 3.5 8Z" stroke="#fff" stroke-width="1.3" fill="none"/><circle cx="12.3" cy="12.5" r="3" fill="#ff7139"/><circle cx="12.3" cy="12.5" r="1.6" fill="#9b3ad6"/></svg>
<svg class="a" style="left:665px;top:552.5px;" width="16" height="16" viewBox="0 0 16 16"><path d="M11.5 0.5L15.5 2.4V13.6L11.5 15.5L4.5 9.2L1.6 11.4L0.5 10.8V5.2L1.6 4.6L4.5 6.8Z M11.5 4.3L6.6 8L11.5 11.7Z" fill="#2a9ff0" fill-rule="evenodd"/></svg>
<svg class="a" style="left:693.4px;top:553px;" width="16" height="14" viewBox="0 0 16 14"><rect x="0" y="0" width="16" height="14" rx="1.5" fill="#3a3a3a"/><rect x="0" y="0" width="16" height="2.5" fill="#5c5c5c"/><path d="M2.5 5L5.5 7.5L2.5 10" stroke="#f0f0f0" stroke-width="1.2" fill="none"/><path d="M7 11H12" stroke="#f0f0f0" stroke-width="1.1"/></svg>
<svg class="a" style="left:721px;top:552.5px;" width="16" height="16" viewBox="0 0 16 16"><path d="M8 1C3.5 1 1 4.2 1 8C1 11.5 2.8 14.5 4.5 15L5.5 11.5L6.8 15H9.2L10.5 11.5L11.5 15C13.2 14.5 15 11.5 15 8C15 4.2 12.5 1 8 1Z" fill="#1e9be0"/><path d="M5 4C4.2 6 4.5 8.5 6 10" stroke="#55c0f5" stroke-width="1" fill="none"/></svg>
<div class="a" style="left:745px;top:547.5px;width:25.5px;height:25px;background:rgba(255,255,255,0.08);border-radius:3px;"></div>
<svg class="a" style="left:750px;top:552.5px;" width="16" height="16" viewBox="0 0 16 16"><rect x="0" y="0" width="12" height="11" fill="#3c4a55"/><rect x="0" y="0" width="12" height="2" fill="#5aaae0"/><path d="M2 4H7M2 6H5" stroke="#4caf50" stroke-width="0.8"/><path d="M10 5C7.5 5 7.6 6 7.6 6V7.2H10V7.6H6.7C6.7 7.6 5.2 7.4 5.2 9.8S6.5 12 6.5 12H7.4V10.8C7.4 10.8 7.3 9.5 8.8 9.5H11.2C11.2 9.5 12.6 9.5 12.6 8.2V6.2C12.6 6.2 12.8 5 10 5Z" fill="#3d7ab8"/><path d="M10.3 15.5C12.8 15.5 12.7 14.5 12.7 14.5V13.3H10.3V12.9H13.6C13.6 12.9 15.1 13.1 15.1 10.7S13.8 8.5 13.8 8.5H12.9V9.7C12.9 9.7 13 11 11.5 11H9.1C9.1 11 7.7 11 7.7 12.3V14.3C7.7 14.3 7.5 15.5 10.3 15.5Z" fill="#ffd43b"/></svg>
<div class="a" style="left:417.5px;top:570.8px;width:5px;height:1.6px;background:#9aa0a8;border-radius:1px;"></div>
<div class="a" style="left:501.5px;top:570.8px;width:5px;height:1.6px;background:#9aa0a8;border-radius:1px;"></div>
<div class="a" style="left:529.5px;top:570.8px;width:5px;height:1.6px;background:#9aa0a8;border-radius:1px;"></div>
<div class="a" style="left:642.3px;top:570.8px;width:5px;height:1.6px;background:#9aa0a8;border-radius:1px;"></div>
<div class="a" style="left:670.5px;top:570.8px;width:5px;height:1.6px;background:#9aa0a8;border-radius:1px;"></div>
<div class="a" style="left:698.9px;top:570.8px;width:5px;height:1.6px;background:#9aa0a8;border-radius:1px;"></div>
<div class="a" style="left:726.7px;top:570.8px;width:5px;height:1.6px;background:#9aa0a8;border-radius:1px;"></div>
<div class="a" style="left:558px;top:570.8px;width:5px;height:1.6px;background:#f0a0a0;border-radius:1px;"></div>
<div class="a" style="left:753px;top:570.8px;width:9.6px;height:1.8px;background:#4cc2ff;border-radius:1px;"></div>
<svg class="a" style="left:891px;top:557.8px;" width="8.4" height="5.2" viewBox="0 0 8.4 5.2"><path d="M0.5 4.7L4.2 1L7.9 4.7" stroke="#d8d8d8" stroke-width="1" fill="none"/></svg>
<svg class="a" style="left:905.5px;top:556.5px;" width="11" height="9" viewBox="0 0 11 9"><path d="M2.6 8.2C1.3 8.2 0.4 7.3 0.4 6.2S1.3 4.3 2.4 4.2C2.8 2.5 4.1 1.4 5.8 1.4C7.4 1.4 8.6 2.4 9 3.8C10 4 10.7 4.9 10.7 6C10.7 7.3 9.8 8.2 8.6 8.2Z" fill="#a4a8ac"/><path d="M1.8 0.6L10.2 8.8" stroke="#1c2530" stroke-width="1.6"/><path d="M1.8 0.6L10.2 8.8" stroke="#e0e0e0" stroke-width="0.85"/></svg>
<svg class="a" style="left:923px;top:556px;" width="11" height="8.6" viewBox="0 0 11 8.6"><path d="M0.6 3.2C3.6 0.6 7.4 0.6 10.4 3.2M2.3 4.9C4.3 3.2 6.7 3.2 8.7 4.9M3.9 6.5C4.9 5.7 6.1 5.7 7.1 6.5" stroke="#e0e0e0" stroke-width="0.95" fill="none"/><circle cx="5.5" cy="7.9" r="0.75" fill="#e0e0e0"/></svg>
<svg class="a" style="left:938.5px;top:556px;" width="11" height="9.4" viewBox="0 0 11 9.4"><path d="M0.6 3H2.6L5.3 0.6V8.8L2.6 6.4H0.6Z" stroke="#e0e0e0" stroke-width="0.9" fill="none" stroke-linejoin="round"/><path d="M6.8 3C7.4 3.9 7.4 5.5 6.8 6.4M8.2 1.8C9.3 3.3 9.3 6.1 8.2 7.6M9.6 0.7C11 2.7 11 6.7 9.6 8.7" stroke="#e0e0e0" stroke-width="0.85" fill="none"/></svg>
<div class="t" style="right:30.40px;top:552.6000px;font-size:7.8906px;color:#f0f0f0;font-family:'Liberation Sans',sans-serif;transform:scaleX(0.9259);transform-origin:100% 0;">4:10 PM</div>
<div class="t" style="right:30.00px;top:562.8000px;font-size:7.8906px;color:#f0f0f0;font-family:'Liberation Sans',sans-serif;transform:scaleX(0.9259);transform-origin:100% 0;">5/12/2024</div>
<svg class="a" style="left:999.8px;top:554.3px;" width="12.4" height="12.4" viewBox="0 0 12.4 12.4"><circle cx="6.2" cy="6.2" r="6.2" fill="#4cc2ff"/></svg>
<div class="t" style="left:1006.00px;top:557.2000px;font-size:7.3438px;color:#0f2030;font-family:'Liberation Sans',sans-serif;transform:translateX(-50%) scaleX(0.9259);transform-origin:50% 0;">22</div>
</body></html>
